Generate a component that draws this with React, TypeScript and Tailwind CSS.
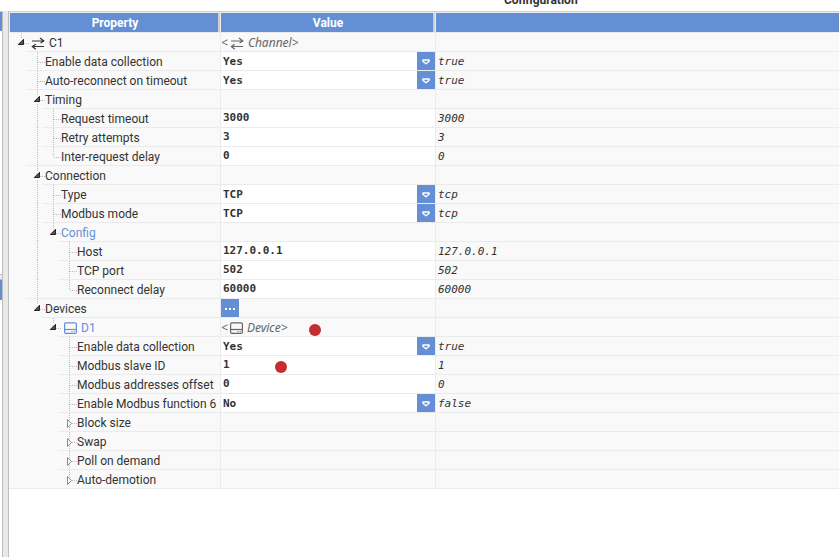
import { useState } from 'react';
import type { ReactNode } from 'react';
import clsx from 'clsx';

interface TreeNode {
  id: string;
  label: string;
  kind?: 'select' | 'input' | 'action' | 'object';
  value?: string;
  raw?: string;
  options?: string[];
  icon?: 'channel' | 'device';
  objectName?: string;
  accent?: boolean;
  marker?: boolean;
  expandable?: boolean;
  children?: TreeNode[];
}

interface FlatRow {
  node: TreeNode;
  level: number;
  isLast: boolean;
  // for every ancestor level: does its vertical guide continue through this row
  guides: boolean[];
}

const YES_NO = ['Yes', 'No'];

const tree: TreeNode[] = [
  {
    id: 'c1',
    label: 'C1',
    kind: 'object',
    icon: 'channel',
    objectName: 'Channel',
    children: [
      { id: 'c1-collect', label: 'Enable data collection', kind: 'select', value: 'Yes', raw: 'true', options: YES_NO },
      { id: 'c1-reconnect', label: 'Auto-reconnect on timeout', kind: 'select', value: 'Yes', raw: 'true', options: YES_NO },
      {
        id: 'timing',
        label: 'Timing',
        children: [
          { id: 'timeout', label: 'Request timeout', kind: 'input', value: '3000', raw: '3000' },
          { id: 'retry', label: 'Retry attempts', kind: 'input', value: '3', raw: '3' },
          { id: 'delay', label: 'Inter-request delay', kind: 'input', value: '0', raw: '0' },
        ],
      },
      {
        id: 'connection',
        label: 'Connection',
        children: [
          { id: 'type', label: 'Type', kind: 'select', value: 'TCP', raw: 'tcp', options: ['TCP', 'UDP'] },
          { id: 'mode', label: 'Modbus mode', kind: 'select', value: 'TCP', raw: 'tcp', options: ['TCP', 'RTU'] },
          {
            id: 'config',
            label: 'Config',
            accent: true,
            children: [
              { id: 'host', label: 'Host', kind: 'input', value: '127.0.0.1', raw: '127.0.0.1' },
              { id: 'port', label: 'TCP port', kind: 'input', value: '502', raw: '502' },
              { id: 'reconnect', label: 'Reconnect delay', kind: 'input', value: '60000', raw: '60000' },
            ],
          },
        ],
      },
      {
        id: 'devices',
        label: 'Devices',
        kind: 'action',
        children: [
          {
            id: 'd1',
            label: 'D1',
            kind: 'object',
            icon: 'device',
            objectName: 'Device',
            accent: true,
            marker: true,
            children: [
              { id: 'd1-collect', label: 'Enable data collection', kind: 'select', value: 'Yes', raw: 'true', options: YES_NO },
              { id: 'd1-slave', label: 'Modbus slave ID', kind: 'input', value: '1', raw: '1', marker: true },
              { id: 'd1-offset', label: 'Modbus addresses offset', kind: 'input', value: '0', raw: '0' },
              { id: 'd1-fn6', label: 'Enable Modbus function 6', kind: 'select', value: 'No', raw: 'false', options: YES_NO },
              { id: 'd1-block', label: 'Block size', expandable: true },
              { id: 'd1-swap', label: 'Swap', expandable: true },
              { id: 'd1-poll', label: 'Poll on demand', expandable: true },
              { id: 'd1-demotion', label: 'Auto-demotion', expandable: true },
            ],
          },
        ],
      },
    ],
  },
];

function flatten(nodes: TreeNode[], closed: string[], level = 0, guides: boolean[] = []): FlatRow[] {
  return nodes.flatMap((node, i) => {
    const isLast = i === nodes.length - 1;
    const row = { node, level, isLast, guides };
    if (!node.children || closed.includes(node.id)) return [row];
    return [row, ...flatten(node.children, closed, level + 1, [...guides, !isLast])];
  });
}

function ChannelIcon() {
  return (
    <svg width="14" height="13" viewBox="0 0 14 13" fill="none" stroke="currentColor" strokeWidth="1.2" className="shrink-0">
      <path d="M1 4h12M9 1L12.8 4L9.6 6M13 9.5H1M4.8 7.2L1.3 9.5L4.8 12.3" />
    </svg>
  );
}

function DeviceIcon() {
  return (
    <svg width="13" height="12" viewBox="0 0 13 12" fill="none" stroke="currentColor" className="shrink-0">
      <rect x="0.6" y="0.8" width="11.8" height="10.6" rx="1.2" strokeWidth="1.2" />
      <path d="M0.5 7.5H12.5" strokeWidth="1.2" />
      <path d="M7.5 9.5h1M9.7 9.5h1" strokeWidth="1" />
    </svg>
  );
}

function NodeIcon({ name }: { name?: TreeNode['icon'] }) {
  return name === 'channel' ? <ChannelIcon /> : <DeviceIcon />;
}

function Guide({ visible }: { visible: boolean }) {
  return (
    <svg width="16" height="19" className="shrink-0" aria-hidden="true">
      {visible && <path d="M11.5 0V19" stroke="#bdbdbd" strokeDasharray="1 1" />}
    </svg>
  );
}

function Branch({ row, open, onToggle }: { row: FlatRow; open: boolean; onToggle: () => void }) {
  const { node, isLast } = row;
  const lines = (
    <path d={isLast ? 'M11.5 0V10M12 10.5H19' : 'M11.5 0V19M12 10.5H19'} stroke="#bdbdbd" strokeDasharray="1 1" />
  );
  if (!node.children && !node.expandable) {
    return (
      <svg width="19" height="18" className="shrink-0" aria-hidden="true">
        {lines}
      </svg>
    );
  }
  return (
    <button type="button" aria-label={node.label} aria-expanded={open} onClick={onToggle} className="shrink-0">
      <svg width="19" height="18" className="block">
        {lines}
        {open ? (
          <>
            <path d="M7 5H14V13H7Z" fill="#f9f9f9" />
            <path d="M13.5 6.3V11.5H8.3Z" fill="#555" stroke="#222" />
          </>
        ) : (
          <path d="M9.5 6.5L13.5 10.5L9.5 14.5Z" fill="#f9f9f9" stroke="#8c8c8c" />
        )}
      </svg>
    </button>
  );
}

function Marker({ className }: { className: string }) {
  return <span className={clsx('absolute size-3 rounded-full bg-[#c42e2e] pointer-events-none', className)} />;
}

function ValueCell({ node }: { node: TreeNode }) {
  const [value, setValue] = useState(node.value ?? '');
  let content: ReactNode = null;

  if (node.kind === 'select') {
    content = (
      <div className="flex h-[18px] bg-white">
        <select
          id={node.id}
          value={value}
          onChange={(e) => setValue(e.target.value)}
          className="w-full appearance-none bg-transparent pl-0.5 pt-0.5 leading-4 font-['DejaVu_Sans_Mono',monospace] text-[11px] font-bold outline-none"
        >
          {node.options?.map((o) => (
            <option key={o}>{o}</option>
          ))}
        </select>
        <span className="flex w-[18px] shrink-0 items-center justify-center bg-[#658fd5] pt-0.5 pointer-events-none">
          <svg width="8" height="6" viewBox="0 0 8 6" fill="none" stroke="#fff" strokeWidth="1.4">
            <path d="M0.9 1H7.1V2.2L4 4.8L0.9 2.2Z" strokeLinejoin="round" />
          </svg>
        </span>
      </div>
    );
  } else if (node.kind === 'input') {
    content = (
      <input
        id={node.id}
        value={value}
        onChange={(e) => setValue(e.target.value)}
        className="block h-[18px] w-full bg-white pl-0.5 font-['DejaVu_Sans_Mono',monospace] text-[11px] font-bold outline-none"
      />
    );
  } else if (node.kind === 'action') {
    content = (
      <button type="button" aria-label="Edit devices" className="flex h-[18px] w-[18px] items-center justify-center bg-[#658fd5] pt-0.5">
        <svg width="12" height="4" fill="#fff">
          <path d="M1 1h2v2H1zM5 1h2v2H5zM9 1h2v2H9z" />
        </svg>
      </button>
    );
  } else if (node.kind === 'object') {
    content = (
      <div className="flex h-[18px] items-center pt-0.5 font-['Noto_Sans',sans-serif] text-[#666] italic">
        <span className="pr-0.5">&lt;</span>
        <NodeIcon name={node.icon} />
        <span className="pl-1">{node.objectName}&gt;</span>
      </div>
    );
  }

  return (
    <td className="relative border-t border-l border-[#ebebeb] p-0">
      {content}
      {node.marker && <Marker className={node.kind === 'object' ? 'left-[88px] top-[6px]' : 'left-[54px] top-[5px]'} />}
    </td>
  );
}

export default function App() {
  const [closed, setClosed] = useState<string[]>([]);
  const rows = flatten(tree, closed);

  const toggle = (id: string) =>
    setClosed((prev) => (prev.includes(id) ? prev.filter((x) => x !== id) : [...prev, id]));

  return (
    <div className="flex min-h-screen bg-white font-['Roboto',sans-serif] text-[12px] leading-[18px] text-[#333]">
      {/* Edge of the neighbouring panel */}
      <div className="flex w-0.5 shrink-0 flex-col pt-[11px]">
        <div className="h-5 border-t border-[#cfcfcf] bg-[#658fd5]" />
        <div className="mt-[243px] h-1.5 border-y border-[#c4c4c4] bg-[#e8e8e8]" />
        <div className="h-5 bg-[#658fd5]" />
      </div>

      <div className="mt-[11px] w-[7px] shrink-0 border-x border-[#bdbdbd] bg-[#e9e9e9]" />

      <main className="min-w-0 flex-1">
        <div className="flex h-[11px] items-end overflow-hidden pb-[3px] pl-[495px]">
          <h1 className="text-[12px] font-bold leading-4">Configuration</h1>
        </div>

        <table className="w-full table-fixed border-separate border-spacing-0 border-t border-[#cfcfcf] bg-[#f9f9f9]">
          <colgroup>
            <col className="w-[211px]" />
            <col className="w-[215px]" />
            <col />
          </colgroup>
          <thead>
            <tr className="h-5 text-white">
              <th className="border-t border-l border-r-2 border-t-[#ececec] border-l-[#ececec] border-r-[#cfcfcf] bg-[#658fd5] p-0 pl-0.5 font-bold">
                Property
              </th>
              <th className="border-t border-l border-r-2 border-t-[#ececec] border-l-[#ececec] border-r-[#cfcfcf] bg-[#658fd5] p-0 pl-0.5 font-bold">
                Value
              </th>
              <th aria-label="Raw value" className="border-t border-l border-[#ececec] bg-[#658fd5] p-0" />
            </tr>
          </thead>
          <tbody>
            {rows.map((row) => {
              const { node, level, guides } = row;
              return (
                <tr key={node.id} className="h-[19px]">
                  <td className="p-0 pl-px">
                    <div className="flex h-[19px]">
                      {guides.map((visible, i) => (
                        <Guide key={i} visible={visible} />
                      ))}
                      <div className="flex min-w-0 flex-1 border-t border-[#ebebeb]">
                        <Branch row={row} open={!node.expandable && !closed.includes(node.id)} onToggle={() => toggle(node.id)} />
                        <div className={clsx('flex items-center whitespace-nowrap pt-0.5', node.accent && 'text-[#658fd5]')}>
                          {node.icon && (
                            <span className={clsx('pr-1', level === 0 ? 'pl-0.5' : 'pl-[3px]')}>
                              <NodeIcon name={node.icon} />
                            </span>
                          )}
                          {node.kind === 'select' || node.kind === 'input' ? (
                            <label htmlFor={node.id}>{node.label}</label>
                          ) : (
                            <span>{node.label}</span>
                          )}
                        </div>
                      </div>
                    </div>
                  </td>
                  <ValueCell node={node} />
                  <td className="truncate border-t border-l border-[#ebebeb] p-0 pl-0.5 pt-0.5 font-['DejaVu_Sans_Mono',monospace] text-[11px] leading-4 italic">
                    {node.raw}
                  </td>
                </tr>
              );
            })}
          </tbody>
          <tfoot>
            <tr>
              <td colSpan={3} className="h-px bg-[#ebebeb] p-0" />
            </tr>
          </tfoot>
        </table>
      </main>
    </div>
  );
}
